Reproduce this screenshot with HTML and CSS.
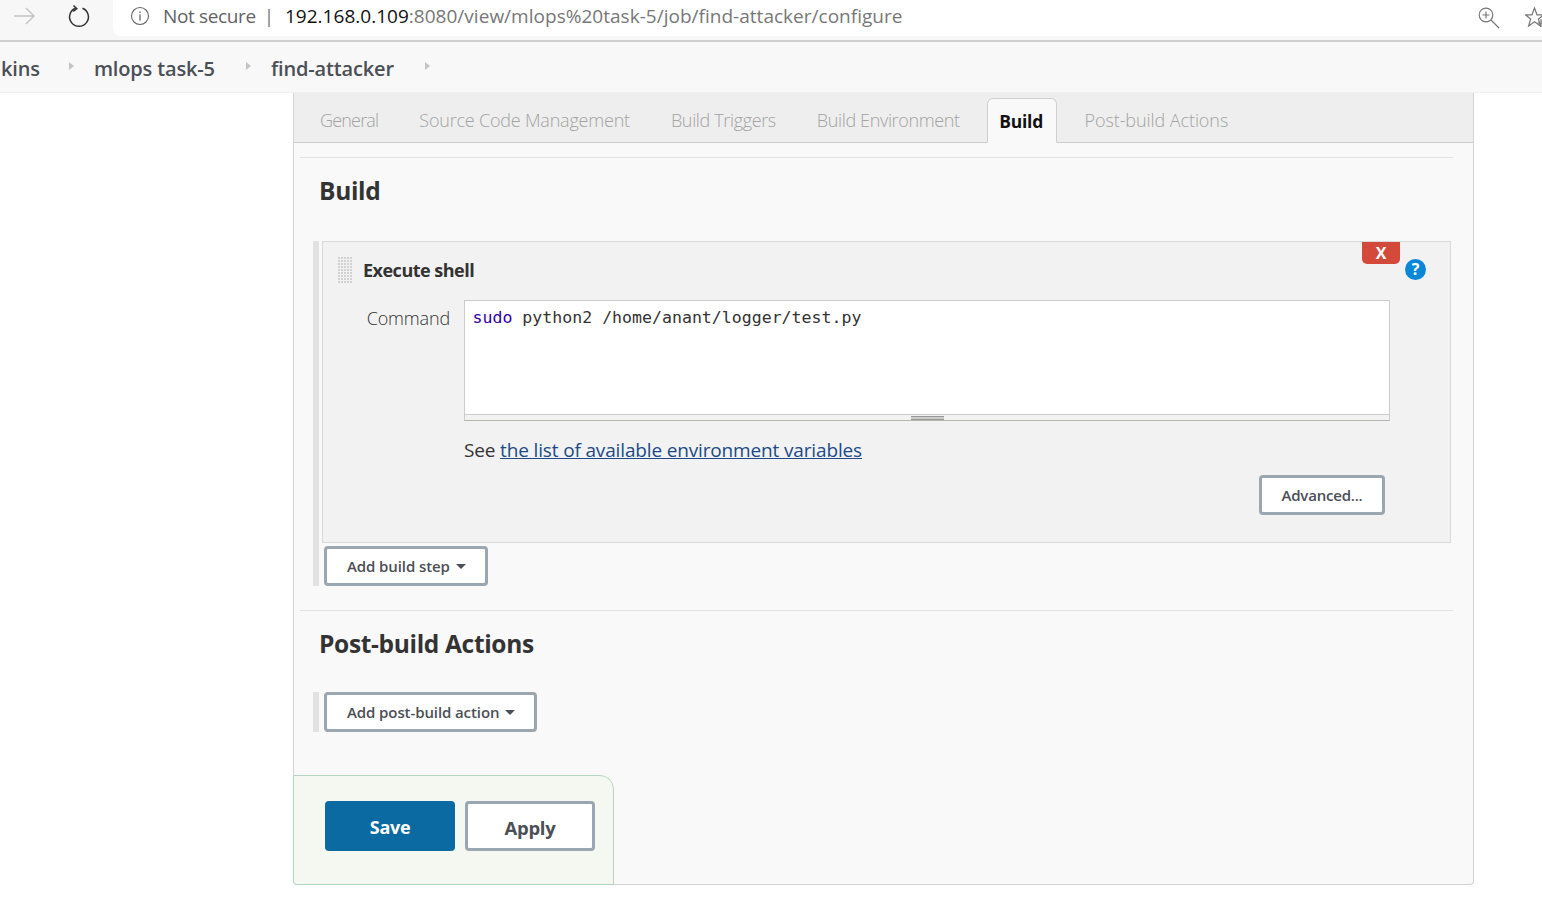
FILE: index.html
```html
<!DOCTYPE html>
<html lang="en">
<head>
<meta charset="utf-8">
<title>find-attacker Config</title>
<link rel="stylesheet" href="styles.css">
</head>
<body>
<header class="chrome">
  <svg class="nav-forward" width="24" height="20" viewBox="0 0 24 20"><path d="M2 10H22M14 2L22 10L14 18" fill="none" stroke="#c4c4c4" stroke-width="1.4"/></svg>
  <svg class="nav-reload" width="24" height="24" viewBox="0 0 24 24"><path d="M15.5 4.2A9.4 9.4 0 1 1 8.5 4.2" fill="none" stroke="#333" stroke-width="1.5"/><path d="M6.5 1.5L9.8 4.6L6.2 7.4" fill="none" stroke="#333" stroke-width="1.5"/></svg>
  <div class="omnibox">
    <svg class="info" width="20" height="20" viewBox="0 0 20 20"><circle cx="10" cy="10" r="8.5" fill="none" stroke="#666" stroke-width="1.1"/><path d="M10 8.6V14.4M10 5.4V7" stroke="#666" stroke-width="1.3"/></svg>
    <span class="not-secure">Not secure</span>
    <span class="sep">|</span>
    <span class="url"><b>192.168.0.109</b>:8080/view/mlops%20task-5/job/find-attacker/configure</span>
  </div>
  <svg class="zoom-icon" width="24" height="24" viewBox="0 0 24 24"><circle cx="9" cy="9" r="6.8" fill="none" stroke="#777" stroke-width="1.2"/><path d="M9 5.5V12.5M5.5 9H12.5M14 14L22 22" stroke="#777" stroke-width="1.2"/></svg>
  <svg class="star-icon" width="20" height="22" viewBox="0 0 20 22"><path d="M9.5 2L12 8.8H19L13.4 13L15.4 20L9.5 15.8L3.6 20L5.6 13L0.5 8.8H7Z" fill="none" stroke="#777" stroke-width="1.2"/><path d="M16 13V21M12.5 17H20" stroke="#777" stroke-width="1.2"/></svg>
</header>

<nav class="breadcrumbs">
  <span class="crumb crumb-first">kins</span><i class="caret"></i>
  <span class="crumb">mlops task-5</span><i class="caret"></i>
  <span class="crumb">find-attacker</span><i class="caret"></i>
</nav>

<main class="panel">
  <div class="tabs">
    <span class="tab tab-general">General</span>
    <span class="tab tab-source">Source Code Management</span>
    <span class="tab tab-mid">Build Triggers</span>
    <span class="tab tab-mid">Build Environment</span>
    <span class="tab active">Build</span>
    <span class="tab tab-post">Post-build Actions</span>
  </div>

  <section class="section section-build">
    <h2>Build</h2>
    <div class="step-row">
      <div class="step">
        <span class="del">X</span>
        <span class="help">?</span>
        <div class="step-head"><i class="grip"></i><strong>Execute shell</strong></div>
        <div class="cmd-row">
          <label>Command</label>
          <div class="editor">
            <div class="code"><span class="kw">sudo</span> python2 /home/anant/logger/test.py</div>
            <div class="grab"><i></i></div>
          </div>
        </div>
        <p class="see">See <a href="#">the list of available environment variables</a></p>
        <div class="adv-row"><button class="btn btn-adv">Advanced...</button></div>
      </div>
      <button class="btn btn-add">Add build step<i class="drop"></i></button>
    </div>
  </section>

  <section class="section section-post">
    <h2>Post-build Actions</h2>
    <div class="step-row"><button class="btn btn-add">Add post-build action<i class="drop"></i></button></div>
  </section>

  <div class="bottom">
    <button class="btn-save">Save</button>
    <button class="btn-apply">Apply</button>
  </div>
</main>
</body>
</html>
```
FILE: styles.css
```css
* { box-sizing: border-box; }
html, body { margin: 0; height: 899px; overflow: hidden; background: #fff; }
body { font-family: "Open Sans", "Noto Sans", sans-serif; color: #333; }

.chrome {
  height: 42px; display: flex; align-items: flex-start; background: #f7f7f7;
  border-bottom: 2px solid #cfcfcf; position: relative; overflow: hidden;
}
.nav-forward { margin: 6px 0 0 12px; flex: none; }
.nav-reload { margin: 4px 0 0 31px; flex: none; }
.omnibox {
  margin-left: 22px; flex: 1; height: 36px; background: #fff; border-radius: 0 0 0 8px;
  display: flex; align-items: center; padding: 0 0 4px 17px; font-size: 19px; white-space: nowrap;
  letter-spacing: -0.35px;
}
.info { flex: none; margin-right: 13px; }
.not-secure { color: #5f6368; }
.sep { color: #777; margin: 0 11px 0 8px; }
.url { color: #777; letter-spacing: 0.02px; }
.url b { color: #111; font-weight: 400; }
.zoom-icon { position: absolute; left: 1477px; top: 6px; }
.star-icon { position: absolute; left: 1525px; top: 6px; }

.breadcrumbs {
  height: 51px; background: #f8f8f8; border-bottom: 1px solid #f0f0f0;
  display: flex; align-items: center; padding-top: 2px;
}
.crumb { font-size: 20px; font-weight: 600; color: #4b4f56; letter-spacing: -0.15px; }
.crumb-first { margin: 0 -2px 0 1px; }
.caret {
  width: 0; height: 0; border-left: 5px solid #c4c4c4; border-top: 4.5px solid transparent; border-bottom: 4.5px solid transparent;
  margin: -4px 20px 0 31px;
}

.panel {
  margin-left: 293px; width: 1181px; height: 792px; background: #f9f9f9;
  border: solid #d3d3d3; border-width: 0 1px 1px 1px; border-radius: 0 0 4px 4px;
  display: flex; flex-direction: column; position: relative;
}
.tabs {
  height: 50px; flex: none; background: #eee; border-bottom: 1px solid #ccc;
  display: flex; align-items: flex-end; padding-left: 5.5px;
}
.tab {
  height: 46px; padding: 8px 19.5px 0; margin-bottom: -1px; font-size: 18px; color: #a3a3a3; font-weight: 300;
  border: 1px solid transparent; letter-spacing: -0.25px; white-space: nowrap; line-height: 28px;
}
.tab-general { letter-spacing: -0.82px; }
.tab-source { letter-spacing: -0.2px; }
.tab-mid { letter-spacing: -0.36px; }
.tab-post { letter-spacing: -0.08px; }
.tab.active {
  height: 45px; background: #f9f9f9; color: #111; font-weight: 700; border-color: #d0d0d0; border-bottom-color: #f9f9f9;
  border-radius: 6px 6px 0 0; padding: 8px 13.5px 0 11.5px; margin: 0 6.5px -1px 6.5px; font-size: 17.5px;
}

.section { margin: 0 20px 0 6px; border-top: 1px solid #e3e3e3; }
.section-build { margin-top: 14px; height: 453px; }
.section-post { flex: 1; }
h2 { margin: 0; font-size: 24.5px; font-weight: 700; color: #333; padding-left: 19px; line-height: 34px; letter-spacing: -0.33px; }
.section-build h2 { padding-top: 16px; height: 83px; }
.section-post h2 { padding-top: 16px; height: 81px; }

.step-row { margin-left: 13px; border-left: 6px solid #e2e2e2; padding-left: 3px; }
.step {
  width: 1129px; height: 302px; background: #f2f2f2; border: 1px solid #d9d9d9; position: relative; margin-bottom: 3px;
}
.del {
  position: absolute; right: 50px; top: 0; width: 38px; height: 22px; background: #d44a3a; color: #fff;
  font-weight: 700; font-size: 16px; text-align: center; line-height: 23px; border-radius: 0 0 5px 5px;
}
.help {
  position: absolute; right: 24px; top: 17px; width: 21px; height: 21px; border-radius: 50%; background: #0b87d8; color: #fff;
  font-weight: 700; font-size: 16px; line-height: 21px; text-align: center;
}
.step-head { display: flex; align-items: center; padding: 12px 0 0 15px; height: 42px; }
.grip {
  width: 15px; height: 26px; margin-right: 10px; flex: none; margin-top: 1px;
  background-image: radial-gradient(circle at 1px 1px, #d2d2d2 1px, transparent 1.2px);
  background-size: 3px 3px;
}
.step-head strong { font-size: 18px; font-weight: 700; color: #333; letter-spacing: -0.5px; margin-top: 1px; }
.cmd-row { display: flex; margin-top: 16px; }
.cmd-row label { width: 141px; flex: none; text-align: right; padding: 4px 14px 0 0; font-size: 18px; font-weight: 300; color: #333; line-height: 28px; letter-spacing: -0.15px; }
.editor { width: 926px; height: 121px; background: #fff; border: 1px solid #ccc; border-bottom-color: #b5b5b0; display: flex; flex-direction: column; }
.code { flex: 1; font-family: "DejaVu Sans Mono", monospace; font-size: 16.57px; padding: 5px 7.5px; line-height: 24px; color: #333; white-space: pre; }
.kw { color: #3300aa; }
.grab { height: 6px; background: #f2f2f2; border-top: 1px solid #ccc; display: flex; justify-content: center; }
.grab i { width: 33px; height: 4px; margin-top: 1px; border-top: 1px solid #999; border-bottom: 1px solid #999; background: #ccc; }
.see { margin: 15px 0 0 141px; font-size: 19px; line-height: 28px; color: #333; letter-spacing: -0.15px; }
.see a { color: #204a87; text-decoration: underline; }
.adv-row { display: flex; justify-content: flex-end; margin: 11px 65px 0 0; }
.btn {
  font-family: inherit; background: #fff; border: 3px solid #9aa7b0; border-radius: 4px; color: #4b4f56; font-weight: 600; cursor: pointer; padding: 0;
}
.btn-adv { width: 126px; height: 40px; font-size: 15px; letter-spacing: -0.2px; }
.btn-add { height: 40px; font-size: 15px; padding: 0 19px 0 20px; margin-left: 2px; display: block; letter-spacing: -0.1px; white-space: nowrap; }
.drop { display: inline-block; margin-left: 6px; vertical-align: 3px; width: 0; height: 0; border: 5px solid transparent; border-top-color: #4b4f56; border-bottom-width: 0; }

.bottom {
  position: absolute; left: -1px; bottom: -1px; width: 321px; height: 110px;
  background: #f5f8f1; border: 1px solid #b4d6c0; border-radius: 0 14px 0 4px; display: flex; gap: 10px; padding: 25px 0 0 31px;
}
.btn-save, .btn-apply { width: 130px; height: 50px; border-radius: 4px; font-family: inherit; font-size: 18px; font-weight: 700; padding: 2px 0 0; cursor: pointer; letter-spacing: -0.3px; }
.btn-save { background: #0b6aa2; color: #fff; border: 0; }
.btn-apply { background: #fff; color: #4b4f56; border: 3px solid #9aa7b0; font-size: 18.5px; }
```
